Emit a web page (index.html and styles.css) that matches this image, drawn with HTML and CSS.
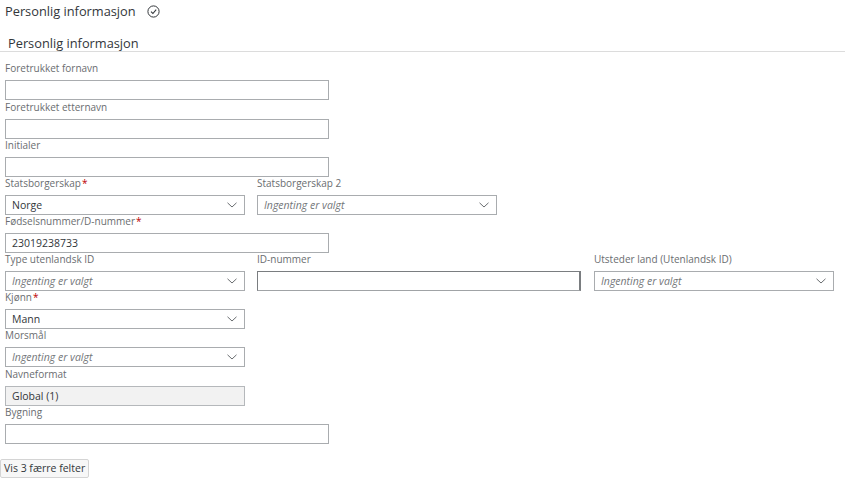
FILE: index.html
```html
<!DOCTYPE html>
<html lang="no">
<head>
<meta charset="utf-8">
<title>Personlig informasjon</title>
<link rel="stylesheet" href="styles.css">
</head>
<body>
<div class="page">
  <div class="title-row">
    <h1 class="title">Personlig informasjon</h1>
    <svg class="check" width="13" height="13" viewBox="0 0 13 13"><circle cx="6.5" cy="6.5" r="5.6" fill="none" stroke="#32363a" stroke-width="1"/><path d="M4 6.7 L5.9 8.5 L9.2 4.6" fill="none" stroke="#32363a" stroke-width="1.1"/></svg>
  </div>
  <h2 class="section">Personlig informasjon</h2>

  <div class="form">
    <div class="row plus">
      <div class="field wide"><label class="lbl">Foretrukket fornavn</label><div class="input"></div></div>
    </div>
    <div class="row">
      <div class="field wide"><label class="lbl">Foretrukket etternavn</label><div class="input"></div></div>
    </div>
    <div class="row">
      <div class="field wide"><label class="lbl">Initialer</label><div class="input"></div></div>
    </div>
    <div class="row">
      <div class="field narrow"><label class="lbl">Statsborgerskap<span class="req">*</span></label><div class="input select"><span class="val">Norge</span><svg class="chev" width="10" height="6" viewBox="0 0 10 6"><path d="M0.5 0.8 L5 5 L9.5 0.8" fill="none" stroke="#6a6d70" stroke-width="1"/></svg></div></div>
      <div class="field narrow"><label class="lbl">Statsborgerskap 2</label><div class="input select"><span class="ph">Ingenting er valgt</span><svg class="chev" width="10" height="6" viewBox="0 0 10 6"><path d="M0.5 0.8 L5 5 L9.5 0.8" fill="none" stroke="#6a6d70" stroke-width="1"/></svg></div></div>
    </div>
    <div class="row">
      <div class="field wide"><label class="lbl">Fødselsnummer/D-nummer<span class="req">*</span></label><div class="input"><span class="val">23019238733</span></div></div>
    </div>
    <div class="row">
      <div class="field narrow"><label class="lbl">Type utenlandsk ID</label><div class="input select"><span class="ph">Ingenting er valgt</span><svg class="chev" width="10" height="6" viewBox="0 0 10 6"><path d="M0.5 0.8 L5 5 L9.5 0.8" fill="none" stroke="#6a6d70" stroke-width="1"/></svg></div></div>
      <div class="field wide"><label class="lbl">ID-nummer</label><div class="input dark"></div></div>
      <div class="field narrow shift"><label class="lbl">Utsteder land (Utenlandsk ID)</label><div class="input select"><span class="ph">Ingenting er valgt</span><svg class="chev" width="10" height="6" viewBox="0 0 10 6"><path d="M0.5 0.8 L5 5 L9.5 0.8" fill="none" stroke="#6a6d70" stroke-width="1"/></svg></div></div>
    </div>
    <div class="row">
      <div class="field narrow"><label class="lbl">Kjønn<span class="req">*</span></label><div class="input select"><span class="val">Mann</span><svg class="chev" width="10" height="6" viewBox="0 0 10 6"><path d="M0.5 0.8 L5 5 L9.5 0.8" fill="none" stroke="#6a6d70" stroke-width="1"/></svg></div></div>
    </div>
    <div class="row plus">
      <div class="field narrow"><label class="lbl">Morsmål</label><div class="input select"><span class="ph">Ingenting er valgt</span><svg class="chev" width="10" height="6" viewBox="0 0 10 6"><path d="M0.5 0.8 L5 5 L9.5 0.8" fill="none" stroke="#6a6d70" stroke-width="1"/></svg></div></div>
    </div>
    <div class="row">
      <div class="field narrow"><label class="lbl">Navneformat</label><div class="input readonly"><span class="val">Global (1)</span></div></div>
    </div>
    <div class="row">
      <div class="field wide"><label class="lbl">Bygning</label><div class="input"></div></div>
    </div>
  </div>

  <button class="btn">Vis 3 færre felter</button>
</div>
</body>
</html>
```

FILE: styles.css
```css
html, body {
  margin: 0;
  padding: 0;
  background: #ffffff;
}
body {
  font-family: "Open Sans", "Noto Sans", sans-serif;
  color: #32363a;
}
.page {
  width: 845px;
}
.title-row {
  display: flex;
  align-items: center;
  gap: 11px;
  padding: 1px 0 0 5px;
  height: 20px;
}
.title {
  margin: 0;
  font-size: 12.8px;
  font-weight: 400;
  line-height: 20px;
}
.check {
  display: block;
  margin-top: 1px;
}
.section {
  margin: 14px 0 0 0;
  padding: 0 0 0 8px;
  font-size: 12.8px;
  font-weight: 400;
  line-height: 16px;
  border-bottom: 1px solid #dcdcdc;
}
.form {
  display: flex;
  flex-direction: column;
  padding: 10px 0 0 5px;
}
.row {
  display: flex;
  gap: 12px;
}
.row.plus {
  margin-bottom: 1px;
}
.field {
  display: flex;
  flex-direction: column;
}
.wide { width: 324px; }
.narrow { width: 240px; }
.shift { margin-left: 1px; }
.lbl {
  box-sizing: border-box;
  font-size: 10px;
  line-height: 13px;
  height: 18px;
  padding-bottom: 5px;
  color: #6a6d70;
  white-space: nowrap;
}
.req {
  color: #bb0000;
  margin-left: 1px;
}
.input {
  box-sizing: border-box;
  height: 20px;
  border: 1px solid #a9acaf;
  background: #fff;
  display: flex;
  align-items: center;
  padding: 0 6px;
  font-size: 10.5px;
}
.input.dark {
  border-color: #7a7d80;
  border-right-width: 2px;
  border-bottom-color: #a0a3a6;
}
.input.readonly {
  background: #f2f2f2;
  border-color: #b5b8bb;
}
.select {
  justify-content: space-between;
  padding-right: 7px;
}
.val { color: #32363a; }
.ph {
  color: #74777a;
  font-style: italic;
}
.chev { display: block; }
.btn {
  margin: 15px 0 0 0;
  height: 19px;
  padding: 0 3px;
  font-family: "Open Sans", "Noto Sans", sans-serif;
  font-size: 10.5px;
  color: #32363a;
  background: #f7f7f7;
  border: 1px solid #d4d4d4;
  border-radius: 2px;
  line-height: 17px;
  display: block;
}
```
